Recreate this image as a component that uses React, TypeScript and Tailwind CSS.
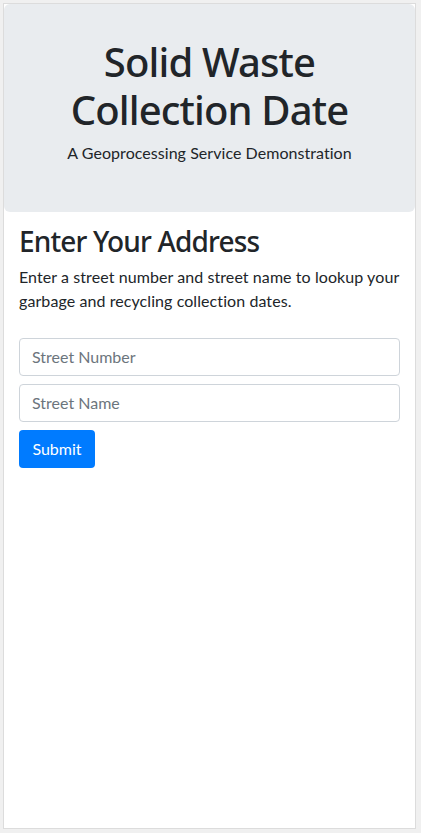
export default function App() {
  return (
    <div className="w-[421px] h-[833px] bg-[#f0f0f0] pl-[3px] pt-[3px] pr-[5px] pb-[4px]" style={{ fontFamily: "Lato, 'Noto Sans', sans-serif" }}>
      <div className="h-full bg-white border border-[#dcdcdc] overflow-hidden">
        <div className="bg-[#e9ecef] rounded-md pt-[34px] pb-[31px] px-4 mb-[13px] text-center text-[#212529]">
          <h1
            className="text-[40px] leading-[48px] font-medium mb-[7px] tracking-[-0.85px]"
            style={{ fontFamily: "'Noto Sans', sans-serif" }}
          >
            Solid Waste Collection Date
          </h1>
          <p className="text-base leading-6 mb-4 tracking-[0.05px]">A Geoprocessing Service Demonstration</p>
        </div>
        <div className="px-[15px] text-[#212529]">
          <h3
            className="text-[28px] leading-[33.6px] font-medium mb-[6px] tracking-[-0.85px]"
            style={{ fontFamily: "'Noto Sans', sans-serif" }}
          >
            Enter Your Address
          </h3>
          <p className="text-base leading-6 mb-[25px] tracking-[0.08px]">
            Enter a street number and street name to lookup your garbage and recycling collection dates.
          </p>
          <form className="flex flex-col">
            <input
              className="h-[38px] border border-[#ced4da] rounded px-3 text-base text-[#495057] placeholder:text-[#6c757d] mb-2 outline-none"
              placeholder="Street Number"
            />
            <input
              className="h-[38px] border border-[#ced4da] rounded px-3 text-base text-[#495057] placeholder:text-[#6c757d] mb-2 outline-none"
              placeholder="Street Name"
            />
            <button type="button" className="self-start h-[38px] w-[76px] bg-[#007bff] text-white rounded text-base">
              Submit
            </button>
          </form>
        </div>
      </div>
    </div>
  );
}
